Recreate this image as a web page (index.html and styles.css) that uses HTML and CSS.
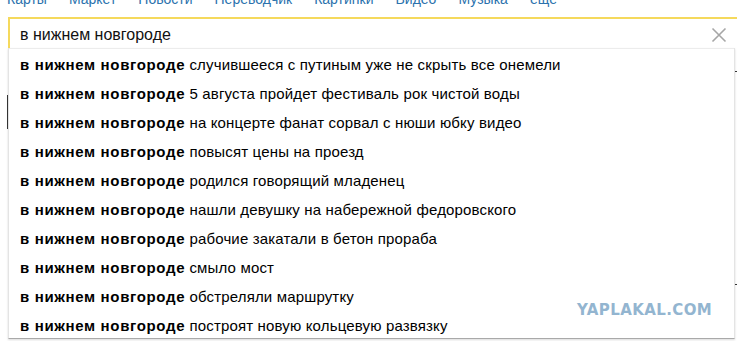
FILE: index.html
```html
<!DOCTYPE html>
<html lang="ru">

<head>
  <meta charset="UTF-8">
  <meta name="viewport" content="width=device-width, initial-scale=1.0">
  <title>в нижнем новгороде</title>
  <link rel="stylesheet" href="styles.css">
</head>

<body>
  <div class="page">
    <nav class="services">
      <a href="#">Карты</a>
      <a href="#">Маркет</a>
      <a href="#">Новости</a>
      <a href="#">Переводчик</a>
      <a href="#">Картинки</a>
      <a href="#">Видео</a>
      <a href="#">Музыка</a>
      <a href="#">ещё</a>
    </nav>

    <div class="search">
      <div class="search-box">
        <input class="search-input" type="text" value="в нижнем новгороде" />
        <button type="button" class="search-clear" aria-label="Очистить">
          <svg width="16" height="16" viewBox="0 0 16 16">
            <path d="M1.5 1.5 L14.5 14.5 M14.5 1.5 L1.5 14.5" stroke="#a6a6a6" stroke-width="1.6" fill="none" />
          </svg>
        </button>
      </div>

      <ul class="suggest">
        <li><b>в нижнем новгороде</b> случившееся с путиным уже не скрыть все онемели</li>
        <li><b>в нижнем новгороде</b> 5 августа пройдет фестиваль рок чистой воды</li>
        <li><b>в нижнем новгороде</b> на концерте фанат сорвал с нюши юбку видео</li>
        <li><b>в нижнем новгороде</b> повысят цены на проезд</li>
        <li><b>в нижнем новгороде</b> родился говорящий младенец</li>
        <li><b>в нижнем новгороде</b> нашли девушку на набережной федоровского</li>
        <li><b>в нижнем новгороде</b> рабочие закатали в бетон прораба</li>
        <li><b>в нижнем новгороде</b> смыло мост</li>
        <li><b>в нижнем новгороде</b> обстреляли маршрутку</li>
        <li><b>в нижнем новгороде</b> построят новую кольцевую развязку</li>
      </ul>
    </div>

    <!-- края страницы, что видны из-под подсказок -->
    <div class="behind behind-left"></div>
    <div class="behind behind-tick behind-tick-top"></div>
    <div class="behind behind-tick behind-tick-bottom"></div>

    <div class="watermark">YAPLAKAL.COM</div>
  </div>
</body>

</html>
```

FILE: styles.css
```css
*,
*::before,
*::after {
  margin: 0;
  padding: 0;
  box-sizing: border-box;
}

html,
body {
  width: 737px;
  height: 341px;
  overflow: hidden;
  background: #fff;
}

body {
  font-family: "Liberation Sans", Arial, sans-serif;
  color: #000;
}

.page {
  position: relative;
  height: 100%;
  padding-top: 1px;
}

.services {
  display: flex;
  gap: 22px;
  height: 17px;
  margin-top: -9px;
  padding-left: 7px;
  font-size: 14px;
  line-height: 14px;
}

.services a {
  color: #2b72ad;
  text-decoration: none;
}

.search {
  margin-top: 8px;
  margin-left: 8px;
}

.search-box {
  display: flex;
  align-items: center;
  height: 31px;
  border: 2px solid #f5d95c;
  border-bottom: none;
  margin-right: -2px;
  background: #fff;
}

.search-input {
  flex: 1;
  border: none;
  outline: none;
  padding-left: 10px;
  padding-top: 2px;
  font-family: inherit;
  font-size: 16px;
  color: #111;
  background: transparent;
}

.search-clear {
  display: flex;
  border: none;
  background: none;
  margin-right: 10px;
  margin-top: 2px;
  cursor: pointer;
}

.suggest {
  list-style: none;
  width: 727px;
  border: 1px solid #e4e4e4;
  border-top: none;
  border-bottom-color: #a9a9a9;
  box-shadow: 0 1px 2px rgba(0, 0, 0, 0.15);
  background: #fff;
}

.suggest li {
  height: 29px;
  line-height: 33px;
  padding-left: 11px;
  font-size: 15px;
  letter-spacing: 0.16px;
  white-space: nowrap;
}

.suggest li:first-child {
  border-top: 1px solid #ececec;
  line-height: 31px;
}

.suggest b {
  font-weight: bold;
  letter-spacing: 0.65px;
}

.behind {
  position: absolute;
  background: #333;
}

.behind-left {
  left: 7px;
  top: 95px;
  width: 1px;
  height: 34px;
}

.behind-tick {
  left: 735px;
  width: 2px;
  height: 1px;
}

.behind-tick-top {
  top: 71px;
}

.behind-tick-bottom {
  top: 284px;
}

.watermark {
  position: absolute;
  left: 577px;
  top: 301px;
  font-family: "DejaVu Sans", sans-serif;
  font-weight: bold;
  font-size: 15px;
  letter-spacing: 0.4px;
  color: #93b5d0;
}
```
